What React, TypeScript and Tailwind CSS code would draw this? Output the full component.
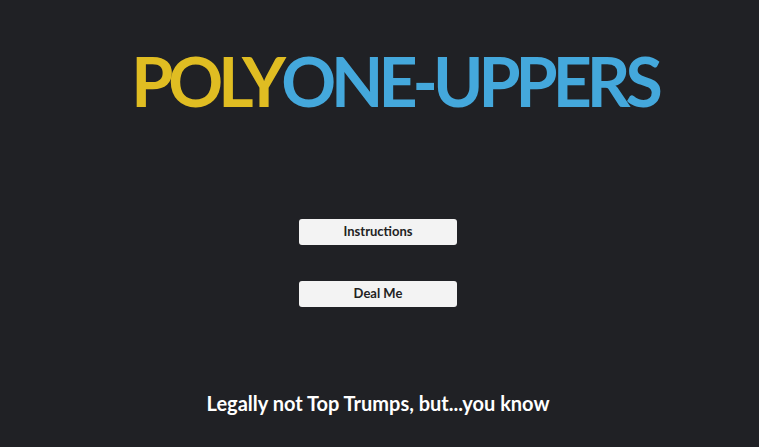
import React from 'react';

const App: React.FC = () => {
  return (
    <div className="min-h-screen w-full bg-[#202125] flex flex-col items-center font-['Lato',sans-serif]">
      <h1 className="mt-[43px] h-[75px] pl-[30px] flex items-center text-[68px] font-bold leading-none tracking-[-5px]">
        <span className="text-[#e0bd22]">POLY</span>
        <span className="text-[#44a8dc]">ONE-UPPERS</span>
      </h1>

      <div className="mt-[101px] mr-[3px] flex flex-col items-center gap-[36px]">
        <button className="w-[158px] h-[26px] rounded-[3px] bg-[#f3f3f3] text-[13px] font-bold text-[#222222]">
          Instructions
        </button>
        <button className="w-[158px] h-[26px] rounded-[3px] bg-[#f3f3f3] text-[13px] font-bold text-[#222222]">
          Deal Me
        </button>
      </div>

      <p className="mt-[86px] mr-[3px] text-[20px] font-bold text-white leading-none">
        Legally not Top Trumps, but...you know
      </p>
    </div>
  );
};

export default App;
